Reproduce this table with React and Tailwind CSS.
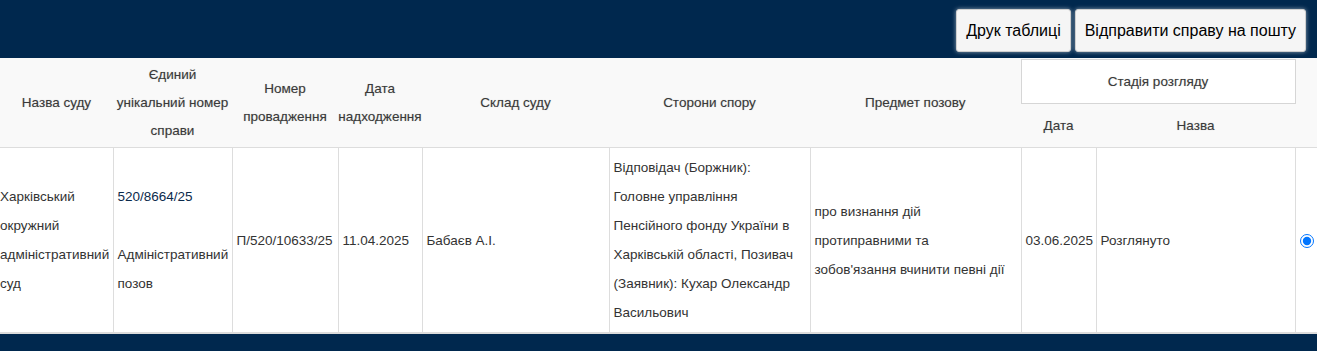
import React from "react";

const F = { fontFamily: '"Liberation Sans", Arial, sans-serif' };

export default function App() {
  const th = "align-middle text-center font-normal text-[13.5px] leading-[28px] text-[#3a3a3a] [text-shadow:0_0_1px_rgba(0,0,0,0.25)]";
  const td = "align-middle border-x border-[#dddddd] px-[4px] py-[5px] text-[13.5px] leading-[29px] text-[#333333]";
  return (
    <div style={F} className="w-[1317px] bg-white">
      <div className="h-[58px] bg-[#00284e] flex justify-end items-start pt-[9px] pr-[11px] gap-[4px]">
        <button className="h-[43px] px-[9px] bg-[#f5f5f5] border border-[#cfcfcf] rounded-[3px] shadow-[0_0_4px_rgba(255,255,255,0.55)] text-[16px] text-black">
          Друк таблиці
        </button>
        <button className="h-[43px] px-[9px] bg-[#f5f5f5] border border-[#cfcfcf] rounded-[3px] shadow-[0_0_4px_rgba(255,255,255,0.55)] text-[16px] text-black">
          Відправити справу на пошту
        </button>
      </div>
      <div className="bg-[#f9f9f9] pt-px">
        <table className="w-[1317px] table-fixed border-collapse">
          <colgroup>
            <col className="w-[113px]" />
            <col className="w-[119px]" />
            <col className="w-[106px]" />
            <col className="w-[84px]" />
            <col className="w-[187px]" />
            <col className="w-[201px]" />
            <col className="w-[211px]" />
            <col className="w-[75px]" />
            <col className="w-[199px]" />
            <col className="w-[22px]" />
          </colgroup>
          <thead className="bg-[#f9f9f9]">
            <tr className="h-[44px]">
              <th rowSpan={2} className={th}>Назва суду</th>
              <th rowSpan={2} className={th}>Єдиний<br />унікальний номер<br />справи</th>
              <th rowSpan={2} className={th}>Номер<br />провадження</th>
              <th rowSpan={2} className={`${th} whitespace-nowrap`}>Дата<br />надходження</th>
              <th rowSpan={2} className={th}>Склад суду</th>
              <th rowSpan={2} className={th}>Сторони спору</th>
              <th rowSpan={2} className={th}>Предмет позову</th>
              <th colSpan={2} className={`${th} bg-white border border-[#d6d6d6]`}>Стадія розгляду</th>
              <th rowSpan={2} className={th}></th>
            </tr>
            <tr className="h-[44px]">
              <th className={th}>Дата</th>
              <th className={th}>Назва</th>
            </tr>
          </thead>
          <tbody className="bg-white">
            <tr className="border-t border-[#dddddd] border-b-2 border-b-[#dcdcdc]">
              <td className={`${td} pl-0 pr-0 border-l-0 whitespace-nowrap`}>Харківський<br />окружний<br />адміністративний<br />суд</td>
              <td className={`${td} whitespace-nowrap`}>
                <a className="text-[#0b2a4c]">520/8664/25</a>
                <br />
                <br />
                Адміністративний<br />позов
              </td>
              <td className={`${td} whitespace-nowrap`}>П/520/10633/25</td>
              <td className={td}>11.04.2025</td>
              <td className={td}>Бабаєв А.І.</td>
              <td className={`${td} whitespace-nowrap`}>
                Відповідач (Боржник):<br />Головне управління<br />Пенсійного фонду України в<br />Харківській області, Позивач<br />(Заявник): Кухар Олександр<br />Васильович
              </td>
              <td className={`${td} whitespace-nowrap`}>про визнання дій<br />протиправними та<br />зобов'язання вчинити певні дії</td>
              <td className={`${td} whitespace-nowrap`}>03.06.2025</td>
              <td className={td}>Розглянуто</td>
              <td className={`${td} px-0 text-center border-r-0`}>
                <input type="radio" defaultChecked readOnly className="m-0 align-middle w-[14px] h-[14px]" />
              </td>
            </tr>
          </tbody>
        </table>
      </div>
      <div className="h-[30px] bg-[#00284e]" />
    </div>
  );
}
